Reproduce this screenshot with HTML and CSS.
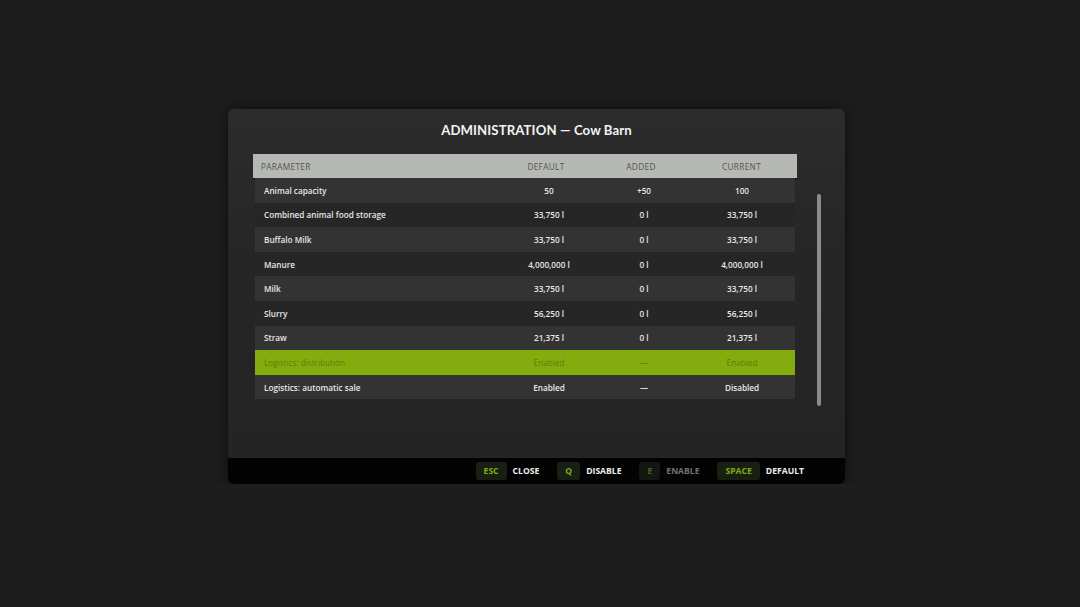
FILE: index.html
```html
<!DOCTYPE html>
<html lang="en">
<head>
  <meta charset="UTF-8" />
  <title>Administration - Cow Barn</title>
  <link rel="stylesheet" href="styles.css">
</head>
<body>
  <div class="dialog">
    <div class="dialog-body">
      <h1>ADMINISTRATION — Cow Barn</h1>

      <div class="content">
        <div class="table">
          <div class="head">
            <span class="param">PARAMETER</span>
            <span>DEFAULT</span>
            <span>ADDED</span>
            <span>CURRENT</span>
          </div>
          <div class="row light">
            <span class="param">Animal capacity</span><span>50</span><span>+50</span><span>100</span>
          </div>
          <div class="row">
            <span class="param">Combined animal food storage</span><span>33,750 l</span><span>0 l</span><span>33,750 l</span>
          </div>
          <div class="row light">
            <span class="param">Buffalo Milk</span><span>33,750 l</span><span>0 l</span><span>33,750 l</span>
          </div>
          <div class="row">
            <span class="param">Manure</span><span>4,000,000 l</span><span>0 l</span><span>4,000,000 l</span>
          </div>
          <div class="row light">
            <span class="param">Milk</span><span>33,750 l</span><span>0 l</span><span>33,750 l</span>
          </div>
          <div class="row">
            <span class="param">Slurry</span><span>56,250 l</span><span>0 l</span><span>56,250 l</span>
          </div>
          <div class="row light">
            <span class="param">Straw</span><span>21,375 l</span><span>0 l</span><span>21,375 l</span>
          </div>
          <div class="row selected">
            <span class="param">Logistics: distribution</span><span>Enabled</span><span>—</span><span>Enabled</span>
          </div>
          <div class="row light">
            <span class="param">Logistics: automatic sale</span><span>Enabled</span><span>—</span><span>Disabled</span>
          </div>
        </div>
        <div class="scrollbar"></div>
      </div>
    </div>

    <div class="footer">
      <span class="key">ESC</span><span class="action">CLOSE</span>
      <span class="key">Q</span><span class="action">DISABLE</span>
      <span class="key off">E</span><span class="action off">ENABLE</span>
      <span class="key">SPACE</span><span class="action">DEFAULT</span>
    </div>
  </div>
</body>
</html>
```

FILE: styles.css
```css
body {
  margin: 0;
  background-color: #1d1d1d;
  font-family: "Open Sans", sans-serif;
  color: #e6e6e6;
  padding: 109px 0 0 228px;
}

.dialog {
  width: 617px;
  border-radius: 6px;
  box-shadow: 0 0 14px rgba(0, 0, 0, 0.55);
}

.dialog-body {
  height: 349px;
  box-sizing: border-box;
  padding: 12px 0 0 25px;
  background: linear-gradient(#2c2c2c, #262626 40%, #242424);
  border-radius: 6px 6px 0 0;
}

h1 {
  margin: 0 0 15px -25px;
  text-align: center;
  font-family: "Lato", sans-serif;
  font-size: 13.2px;
  line-height: 18px;
  font-weight: 700;
  color: #f2f2f2;
  letter-spacing: 0.1px;
}

.content {
  display: flex;
  gap: 20px;
}

.table {
  width: 544px;
}

.head {
  display: grid;
  grid-template-columns: 243px 100px 90px 1fr;
  height: 24px;
  align-items: center;
  background-color: #b6b8b4;
  box-shadow: 0 2px 0 #1a1a1a;
  font-size: 8.3px;
  color: #555555;
  letter-spacing: 0.3px;
  text-align: center;
}
.head .param {
  text-align: left;
  padding-left: 8px;
}

.row {
  display: grid;
  grid-template-columns: 244px 100px 90px 1fr;
  margin: 0 2px;
  height: 24.6px;
  align-items: center;
  background-color: #262626;
  font-size: 8.2px;
  font-weight: 600;
  color: #e8e8e8;
  text-align: center;
}
.row.light {
  background-color: #333333;
}
.row .param {
  text-align: left;
  padding-left: 9px;
}
.row.selected {
  background-color: #83ad0f;
  color: #5c7d0b;
  font-weight: 400;
}

.scrollbar {
  margin-top: 40px;
  width: 4px;
  height: 212px;
  border-radius: 2px;
  background-color: #8c8c8c;
}

.footer {
  display: flex;
  justify-content: flex-end;
  align-items: center;
  height: 26px;
  padding-right: 41px;
  background-color: #030303;
  border-radius: 0 0 6px 6px;
  font-size: 8.6px;
  font-weight: 700;
}

.key {
  height: 18px;
  line-height: 18px;
  padding: 0 8px;
  border-radius: 3px;
  background-color: #182014;
  color: #7fab1c;
  margin-right: 6px;
}
.key.off {
  background-color: #121711;
  color: #4a6120;
}

.action {
  color: #ececec;
  margin-right: 18px;
}
.action:last-child {
  margin-right: 0;
}
.action.off {
  color: #707070;
}
```
